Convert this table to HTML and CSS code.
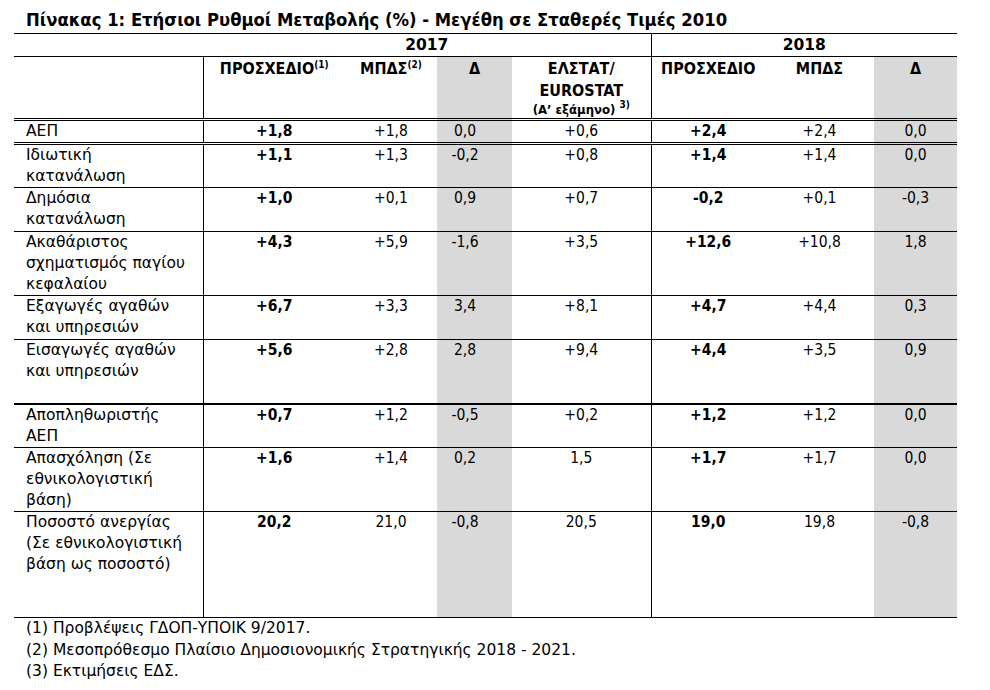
FILE: index.html
```html
<!DOCTYPE html>
<html lang="el">
<head>
<meta charset="utf-8">
<title>Πίνακας 1</title>
<link rel="stylesheet" href="styles.css">
</head>
<body>
<div class="page">
  <h1 class="title">Πίνακας 1: Ετήσιοι Ρυθμοί Μεταβολής (%) - Μεγέθη σε Σταθερές Τιμές 2010</h1>
  <table class="data">
    <colgroup>
      <col class="c-label"><col class="c-p17"><col class="c-m17"><col class="c-d17"><col class="c-el"><col class="c-p18"><col class="c-m18"><col class="c-d18">
    </colgroup>
    <tr class="r-year">
      <td></td>
      <td colspan="4" class="year">2017</td>
      <td colspan="3" class="year sep">2018</td>
    </tr>
    <tr class="r-head">
      <td></td>
      <th class="sep">ΠΡΟΣΧΕΔΙΟ<sup>(1)</sup></th>
      <th>ΜΠΔΣ<sup>(2)</sup></th>
      <th class="gray">Δ</th>
      <th>ΕΛΣΤΑΤ/<br>EUROSTAT<span class="small">(Α’ εξάμηνο) <sup>3)</sup></span></th>
      <th class="sep">ΠΡΟΣΧΕΔΙΟ</th>
      <th>ΜΠΔΣ</th>
      <th class="gray">Δ</th>
    </tr>
    <tr class="r-1 dbl">
      <td class="label">ΑΕΠ</td>
      <td class="sep b">+1,8</td><td>+1,8</td><td class="gray d">0,0</td><td>+0,6</td>
      <td class="sep b">+2,4</td><td>+2,4</td><td class="gray">0,0</td>
    </tr>
    <tr class="r-2a">
      <td class="label">Ιδιωτική<br>κατανάλωση</td>
      <td class="sep b">+1,1</td><td>+1,3</td><td class="gray d">-0,2</td><td>+0,8</td>
      <td class="sep b">+1,4</td><td>+1,4</td><td class="gray">0,0</td>
    </tr>
    <tr class="r-2b">
      <td class="label">Δημόσια<br>κατανάλωση</td>
      <td class="sep b">+1,0</td><td>+0,1</td><td class="gray d">0,9</td><td>+0,7</td>
      <td class="sep b">-0,2</td><td>+0,1</td><td class="gray">-0,3</td>
    </tr>
    <tr class="r-3">
      <td class="label">Ακαθάριστος<br>σχηματισμός παγίου<br>κεφαλαίου</td>
      <td class="sep b">+4,3</td><td>+5,9</td><td class="gray d">-1,6</td><td>+3,5</td>
      <td class="sep b">+12,6</td><td>+10,8</td><td class="gray">1,8</td>
    </tr>
    <tr class="r-2b">
      <td class="label">Εξαγωγές αγαθών<br>και υπηρεσιών</td>
      <td class="sep b">+6,7</td><td>+3,3</td><td class="gray d">3,4</td><td>+8,1</td>
      <td class="sep b">+4,7</td><td>+4,4</td><td class="gray">0,3</td>
    </tr>
    <tr class="r-3">
      <td class="label">Εισαγωγές αγαθών<br>και υπηρεσιών</td>
      <td class="sep b">+5,6</td><td>+2,8</td><td class="gray d">2,8</td><td>+9,4</td>
      <td class="sep b">+4,4</td><td>+3,5</td><td class="gray">0,9</td>
    </tr>
    <tr class="r-2a thick">
      <td class="label">Αποπληθωριστής<br>ΑΕΠ</td>
      <td class="sep b">+0,7</td><td>+1,2</td><td class="gray d">-0,5</td><td>+0,2</td>
      <td class="sep b">+1,2</td><td>+1,2</td><td class="gray">0,0</td>
    </tr>
    <tr class="r-3">
      <td class="label">Απασχόληση (Σε<br>εθνικολογιστική<br>βάση)</td>
      <td class="sep b">+1,6</td><td>+1,4</td><td class="gray d">0,2</td><td>1,5</td>
      <td class="sep b">+1,7</td><td>+1,7</td><td class="gray">0,0</td>
    </tr>
    <tr class="r-5 last">
      <td class="label">Ποσοστό ανεργίας<br>(Σε εθνικολογιστική<br>βάση ως ποσοστό)</td>
      <td class="sep b">20,2</td><td>21,0</td><td class="gray d">-0,8</td><td>20,5</td>
      <td class="sep b">19,0</td><td>19,8</td><td class="gray">-0,8</td>
    </tr>
  </table>
  <div class="notes">
    <p>(1) Προβλέψεις ΓΔΟΠ-ΥΠΟΙΚ 9/2017.</p>
    <p>(2) Μεσοπρόθεσμο Πλαίσιο Δημοσιονομικής Στρατηγικής 2018 - 2021.</p>
    <p>(3) Εκτιμήσεις ΕΔΣ.</p>
  </div>
</div>
</body>
</html>
```
FILE: styles.css
```css
html, body {
  margin: 0;
  padding: 0;
  background: #ffffff;
}
body {
  font-family: "DejaVu Sans", sans-serif;
  color: #000000;
  font-size: 15.5px;
}
.page {
  padding-left: 14px;
  width: 943px;
}
.title {
  margin: 0;
  padding: 9px 0 0 12px;
  height: 24px;
  font-family: "DejaVu Sans Condensed", "DejaVu Sans", sans-serif;
  font-stretch: condensed;
  font-size: 18.3px;
  font-weight: bold;
  line-height: 22px;
  white-space: nowrap;
}
.data {
  border-collapse: collapse;
  table-layout: fixed;
  width: 943px;
  line-height: 21px;
}
.c-label { width: 189px; }
.c-p17 { width: 142px; }
.c-m17 { width: 92px; }
.c-d17 { width: 75px; }
.c-el { width: 139px; }
.c-p18 { width: 114px; }
.c-m18 { width: 109px; }
.c-d18 { width: 83px; }

.data td, .data th {
  padding: 0;
  vertical-align: top;
  text-align: center;
  border-top: 1px solid #000;
  font-family: "DejaVu Sans Condensed", "DejaVu Sans", sans-serif;
  font-stretch: condensed;
}
.data th {
  font-weight: bold;
  font-size: 16px;
  line-height: 22px;
  padding-top: 1px;
}
.r-year td {
  height: 22px;
  border-bottom: 1px solid #000;
}
.data td.year {
  font-family: "DejaVu Sans", sans-serif;
  font-stretch: normal;
  font-weight: bold;
  font-size: 15.5px;
  line-height: 22px;
}
.r-head td, .r-head th {
  height: 60px;
  border-bottom: 3px double #000;
}
.r-head th sup {
  font-size: 10px;
  vertical-align: 6px;
  line-height: 0;
}
.small {
  display: block;
  font-size: 13px;
  line-height: 16px;
}
.small sup {
  font-size: 10px;
  vertical-align: 5px;
  line-height: 0;
}
.sep {
  border-left: 1px solid #000;
}
.gray {
  background: #d9d9d9;
}
.data td.d {
  padding-right: 19px;
}
.b {
  font-weight: bold;
}
.data td.label {
  padding-left: 12px;
  text-align: left;
  font-family: "DejaVu Sans", sans-serif;
  font-stretch: normal;
}
.dbl td {
  border-bottom: 3px double #000;
}
.thick td {
  border-top: 2px solid #000;
}
.last td {
  border-bottom: 1px solid #000;
}
.r-1 td { height: 20px; }
.r-2a td { height: 41px; }
.r-2b td { height: 43px; }
.r-3 td { height: 63px; }
.r-5 td { height: 105px; }

.notes {
  padding: 0 0 0 12px;
  line-height: 21.5px;
}
.notes p {
  margin: 0;
}
```
